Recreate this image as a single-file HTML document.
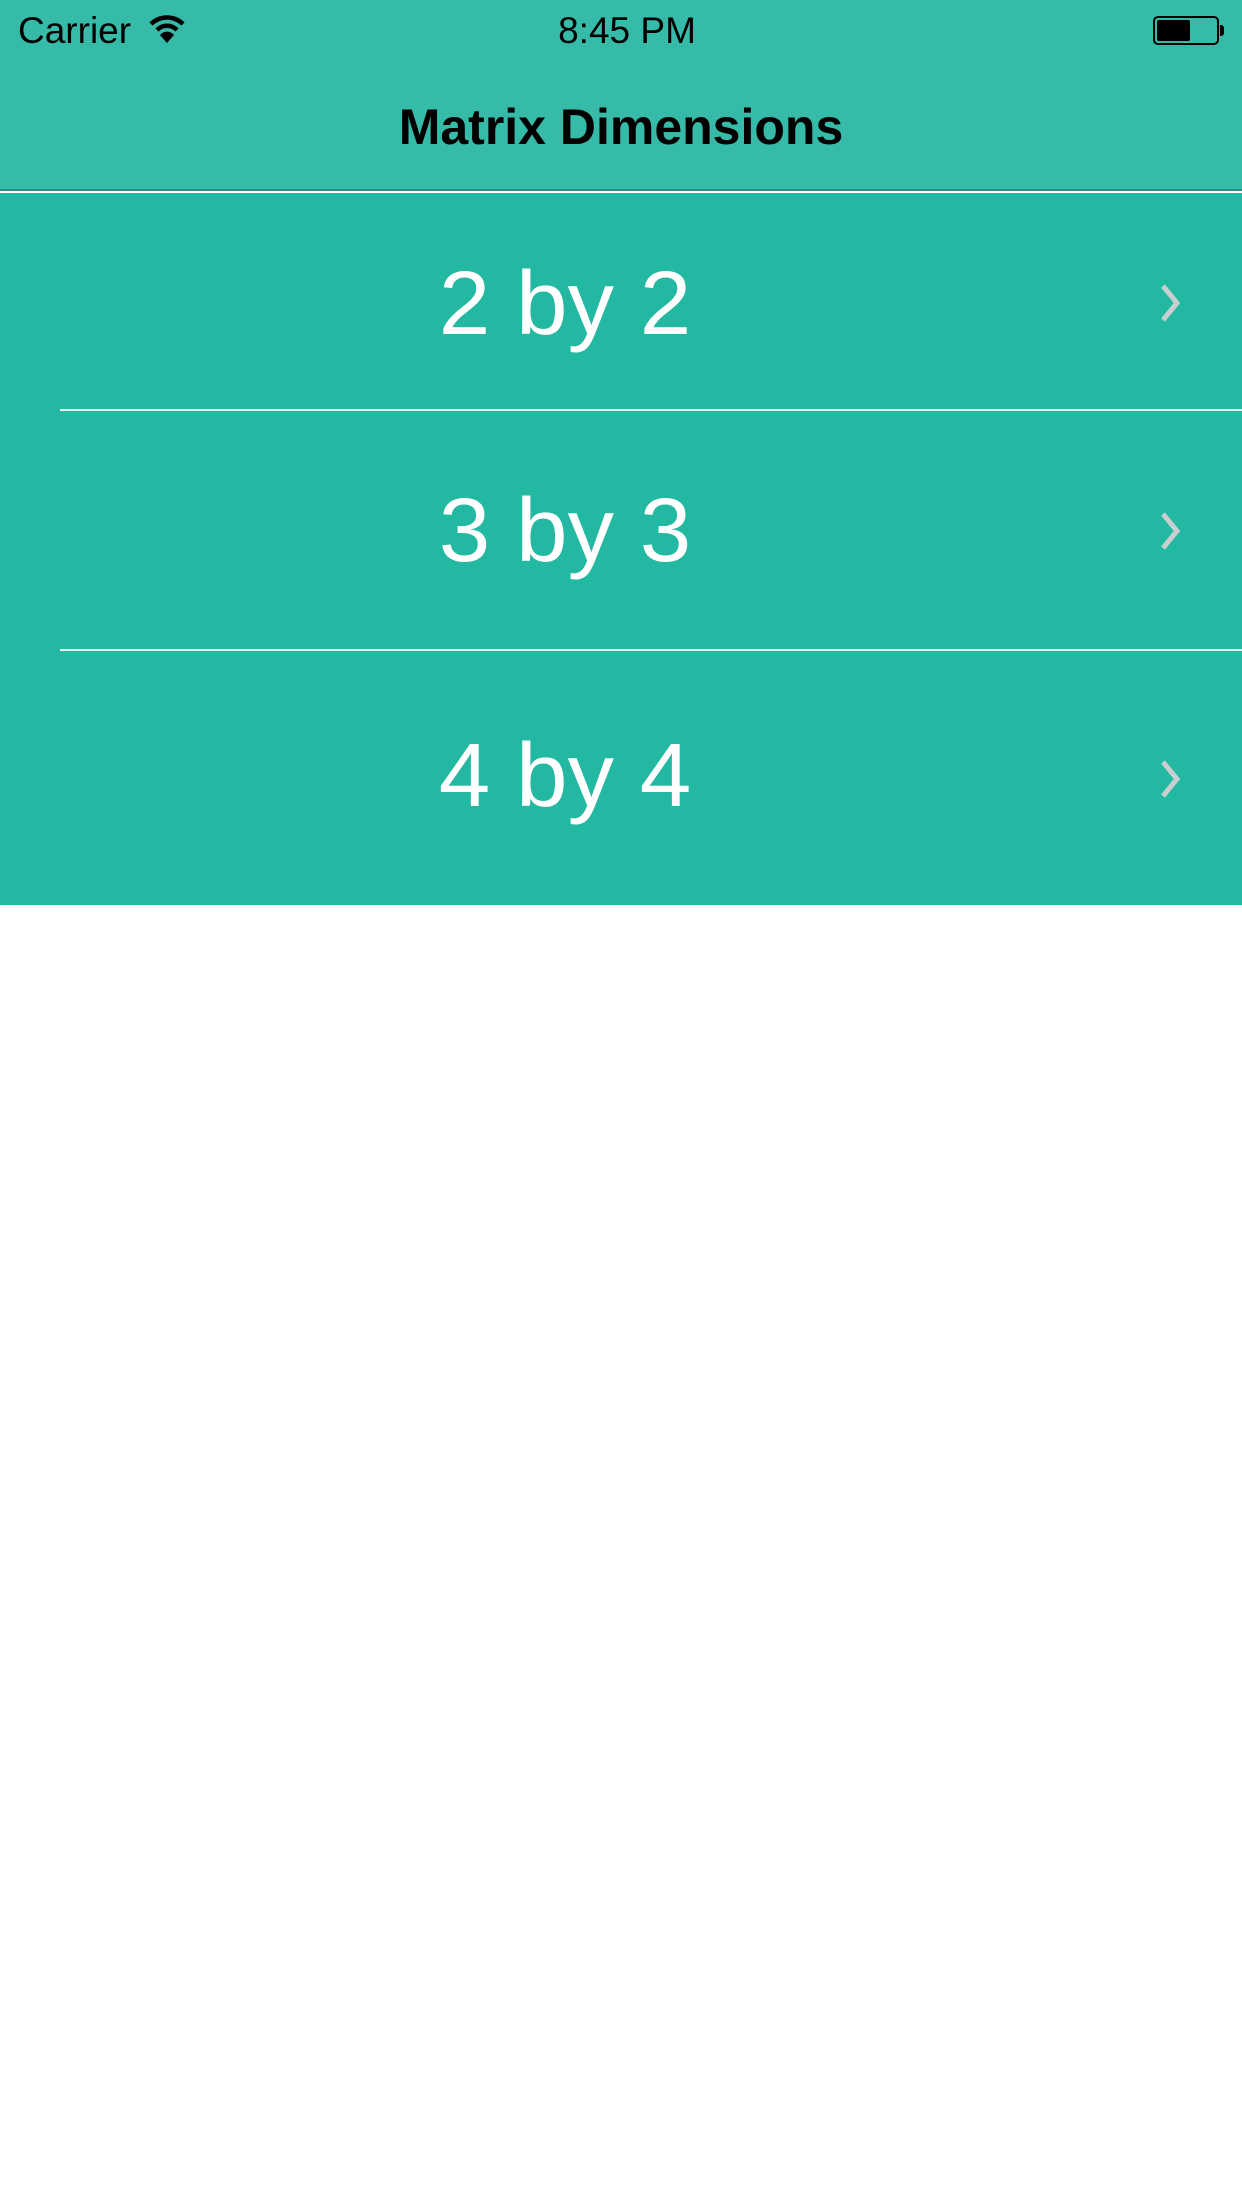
<!DOCTYPE html>
<html><head><meta charset="utf-8"><style>
*{margin:0;padding:0;box-sizing:border-box}
body{width:1242px;height:2208px;background:#fff;position:relative;overflow:hidden;font-family:"Liberation Sans",sans-serif}
.nav{position:absolute;left:0;top:0;width:1242px;height:191px;background:#37bba9;border-bottom:2px solid #2a8f80}
.st{position:absolute;top:11px;font-size:37px;color:#000;line-height:40px}
.title{position:absolute;top:98px;width:100%;text-align:center;font-size:50px;font-weight:bold;color:#000;line-height:58px;transform:scaleX(1.0)}
.rows{position:absolute;left:0;top:193px;width:1242px;height:712px;background:#23b8a2}
.row{position:absolute;left:0;width:1242px}
.row span{position:absolute;left:0;width:1130px;text-align:center;color:#fff;font-size:90px;line-height:120px;transform:scaleX(1.03)}
.sep{position:absolute;left:60px;right:0;height:2px;background:#e8f7f4}
.chev{position:absolute;left:1158px;width:26px;height:40px}
</style></head><body>
<div class="nav">
  <div class="st" style="left:18px">Carrier</div>
  <svg style="position:absolute;left:148px;top:14px" width="38" height="30" viewBox="0 0 38 30">
    <path d="M3 10 A23 23 0 0 1 35 10" stroke="#000" stroke-width="4.5" fill="none"/>
    <path d="M9 16 A14 14 0 0 1 29 16" stroke="#000" stroke-width="4.5" fill="none"/>
    <path d="M19 29 L12 21 A9 9 0 0 1 26 21 Z" fill="#000"/>
  </svg>
  <div class="st" style="left:0;width:1254px;text-align:center">8:45 PM</div>
  <div style="position:absolute;left:1153px;top:16px;width:66px;height:29px;border:2px solid #000;border-radius:5px">
    <div style="position:absolute;left:2px;top:2px;width:33px;height:21px;background:#000;border-radius:2px"></div>
  </div>
  <div style="position:absolute;left:1220px;top:25px;width:4px;height:11px;background:#000;border-radius:0 3px 3px 0"></div>
  <div class="title">Matrix Dimensions</div>
</div>
<div class="rows">
  <div class="row" style="top:51px"><span>2 by 2</span></div>
  <div class="sep" style="top:216px"></div>
  <div class="row" style="top:278px"><span>3 by 3</span></div>
  <div class="sep" style="top:456px"></div>
  <div class="row" style="top:523px"><span>4 by 4</span></div>
  <svg class="chev" style="top:90px" viewBox="0 0 26 40"><path d="M5 3 L19 20 L5 37" stroke="#c9cfd0" stroke-width="5" fill="none"/></svg>
  <svg class="chev" style="top:318px" viewBox="0 0 26 40"><path d="M5 3 L19 20 L5 37" stroke="#c9cfd0" stroke-width="5" fill="none"/></svg>
  <svg class="chev" style="top:566px" viewBox="0 0 26 40"><path d="M5 3 L19 20 L5 37" stroke="#c9cfd0" stroke-width="5" fill="none"/></svg>
</div>
</body></html>
